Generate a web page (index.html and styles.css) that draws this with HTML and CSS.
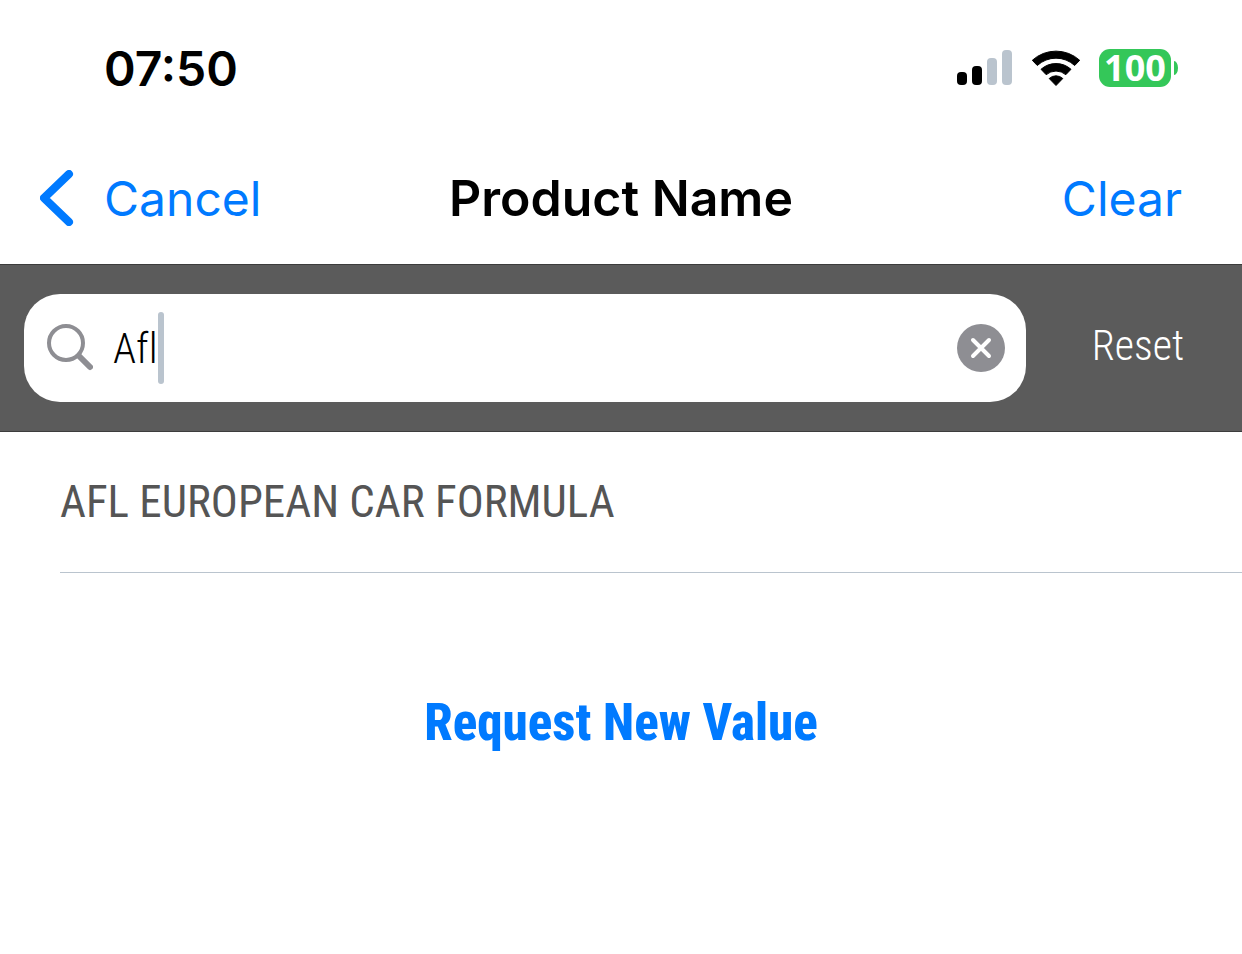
FILE: index.html
```html
<!DOCTYPE html>
<html lang="en">

<head>
  <title>Product Name</title>

  <meta charset="utf-8">
  <meta name="viewport" content="width=device-width, initial-scale=1">

  <link rel="stylesheet" href="styles.css">
</head>

<body>
  <div class="status">
    <time class="clock">07:50</time>
    <div class="indicators">
      <svg class="signal" viewBox="0 0 56 36" role="img" aria-label="Signal">
        <rect x="0" y="22" width="10" height="13" rx="4" />
        <rect x="15" y="16" width="10" height="19" rx="4" />
        <rect class="off" x="30" y="8" width="10" height="27" rx="4" />
        <rect class="off" x="45" y="0" width="10" height="35" rx="4" />
      </svg>
      <svg class="wifi" viewBox="0 0 48 36" role="img" aria-label="Wi-Fi">
        <path d="M0.300 10.300 A35.200 35.200 0 0 1 47.700 10.300 L42.700 15.500 A27.500 27.500 0 0 0 5.300 15.500 Z" />
        <path d="M9 19.300 A22.500 22.500 0 0 1 39 19.300 L33.800 24.700 A15 15 0 0 0 14.200 24.700 Z" />
        <path d="M17.200 28.500 A10 10 0 0 1 30.800 28.500 L24 35.500 Z" />
      </svg>
      <div class="battery"><span class="level">100</span></div>
    </div>
  </div>

  <header class="navbar">
    <button type="button" class="back">
      <svg class="chevron" viewBox="0 0 34 56" aria-hidden="true">
        <path d="M29 4 L4 28 L29 52" />
      </svg>
      Cancel
    </button>
    <h1>Product Name</h1>
    <button type="button" class="clear">Clear</button>
  </header>

  <form class="search" onsubmit="return false;">
    <div class="field">
      <label for="query" aria-label="Search">
        <svg class="glass" viewBox="0 0 48 48" aria-hidden="true">
          <circle cx="21" cy="19" r="17" />
          <path class="handle" d="M34 32 L45 43" />
        </svg>
      </label>
      <input type="text" id="query" name="query" value="Afl" autocomplete="off">
      <span class="caret"></span>
      <button type="button" class="erase" aria-label="Clear text">
        <svg viewBox="0 0 48 48" aria-hidden="true">
          <circle cx="24" cy="24" r="24" />
          <path d="M16 16 L32 32 M32 16 L16 32" />
        </svg>
      </button>
    </div>
    <button type="reset" class="reset">Reset</button>
  </form>

  <main>
    <ul class="results">
      <li>AFL EUROPEAN CAR FORMULA</li>
    </ul>
    <button type="button" class="request">Request New Value</button>
  </main>
</body>

</html>
```
FILE: styles.css
```css
* {
  box-sizing: border-box;
}

body {
  margin: 0;
  background-color: #fff;
  color: #000;
  font-family: Inter, sans-serif;
}

button {
  padding: 0;
  border: 0;
  background: none;
  color: #007aff;
  font: inherit;
  cursor: pointer;
}

svg {
  display: block;
}

.status {
  display: flex;
  justify-content: space-between;
  align-items: center;
  height: 132px;
  padding: 4px 64px 0 104px;
}

.clock {
  font-size: 48px;
  font-weight: 600;
}

.indicators {
  display: flex;
  align-items: center;
  gap: 19px;
}

.signal {
  width: 56px;
  height: 36px;
}

.signal .off {
  fill: #bac4ce;
}

.wifi {
  width: 48px;
  height: 36px;
  stroke: #000;
  stroke-width: 1px;
  stroke-linejoin: round;
}

.battery {
  display: flex;
  align-items: center;
  gap: 3px;
}

.level {
  width: 72px;
  border-radius: 11px;
  background-color: #34c759;
  color: #fff;
  font-family: "Noto Sans", sans-serif;
  font-size: 36px;
  font-weight: 700;
  line-height: 38px;
  text-align: center;
}

.battery::after {
  content: "";
  width: 4px;
  height: 14px;
  border-radius: 0 4px 4px 0 / 0 7px 7px 0;
  background-color: #34c759;
}

.navbar {
  display: grid;
  grid-template-columns: 1fr auto 1fr;
  align-items: center;
  height: 132px;
  padding: 0 40px;
  font-size: 48px;
}

.navbar h1 {
  margin: 0;
  font-size: 50px;
  font-weight: 600;
}

.back {
  display: flex;
  align-items: center;
  gap: 30px;
}

.chevron {
  width: 34px;
  height: 56px;
  fill: none;
  stroke: #007aff;
  stroke-width: 8px;
  stroke-linecap: round;
  stroke-linejoin: round;
}

.clear {
  justify-self: end;
  margin-right: 20px;
}

.search {
  display: flex;
  align-items: center;
  padding: 29px 0 29px 24px;
  border-top: 1px solid #3c3c3c;
  border-bottom: 1px solid #3c3c3c;
  background-color: #5b5b5b;
  font-family: "Roboto Condensed", "Liberation Sans Narrow", sans-serif;
  font-size: 42px;
  font-weight: 300;
}

.field {
  display: flex;
  flex: 1;
  align-items: center;
  height: 108px;
  padding: 0 21px;
  border-radius: 36px;
  background-color: #fff;
}

.glass {
  width: 48px;
  height: 48px;
  margin-right: 20px;
  fill: none;
  stroke: #8e8e93;
  stroke-width: 4px;
  stroke-linecap: round;
}

.glass .handle {
  stroke-width: 6px;
}

.field input {
  field-sizing: content;
  padding: 0;
  border: 0;
  outline: 0;
  background: none;
  font: inherit;
  font-variant-ligatures: none;
}

.caret {
  width: 6px;
  height: 72px;
  border-radius: 3px;
  background-color: #bac4ce;
}

.erase {
  width: 48px;
  margin-left: auto;
  fill: #8e8e93;
}

.erase path {
  stroke: #fff;
  stroke-width: 4px;
  stroke-linecap: round;
}

.reset {
  width: 216px;
  padding: 0 0 6px 8px;
  color: #fff;
}

main {
  font-family: "Roboto Condensed", "Liberation Sans Narrow", sans-serif;
}

.results {
  margin: 0;
  padding: 0 0 0 60px;
  list-style: none;
}

.results li {
  border-bottom: 1px solid #bac4ce;
  color: #555;
  font-size: 45px;
  line-height: 140px;
}

.request {
  display: block;
  margin: 80px auto;
  font-size: 51px;
  font-weight: 800;
  line-height: 140px;
}
```
